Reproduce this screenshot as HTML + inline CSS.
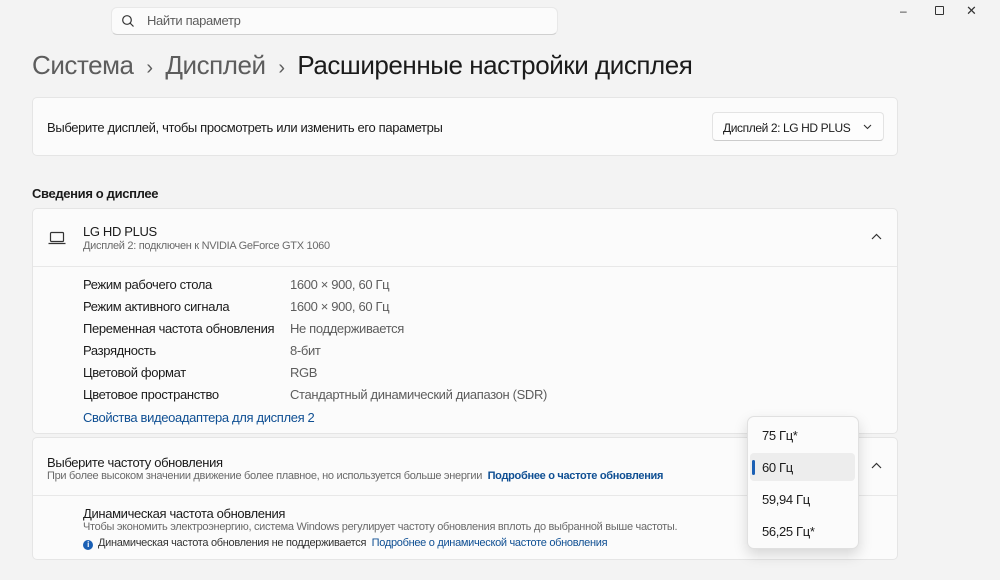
<!DOCTYPE html>
<html><head><meta charset="utf-8"><style>
*{box-sizing:border-box;margin:0;padding:0}
body{width:1000px;height:580px;background:#f3f3f3;font-family:"Liberation Sans",sans-serif;color:#1b1b1b;position:relative;overflow:hidden;font-size:13px;letter-spacing:-0.35px;white-space:nowrap}
.abs{position:absolute}
.card{position:absolute;left:32px;width:866px;background:#fbfbfb;border:1px solid #e5e5e5;border-radius:5px}
.link{color:#0f4f93}
.lbl{position:absolute;left:83px}
.val{position:absolute;left:290px;color:#5d5d5d}
.sub{color:#6a6a6a;font-size:11px;letter-spacing:-0.3px}
</style></head><body>
<div class="abs" style="left:111px;top:7px;width:447px;height:28px;background:#fbfbfb;border-radius:6px;border:1px solid #e8e8e8;border-bottom:1px solid #d0d0d0"></div>
<svg class="abs" style="left:121px;top:14px" width="14" height="14" viewBox="0 0 14 14"><circle cx="6" cy="6" r="4.3" fill="none" stroke="#333" stroke-width="1.2"/><line x1="9" y1="9" x2="12.5" y2="12.5" stroke="#333" stroke-width="1.2"/></svg>
<div class="abs" style="left:147px;top:13px;color:#5d5d5d">Найти параметр</div>
<div class="abs" style="left:900px;top:4px;font-size:12px;color:#333">–</div>
<div class="abs" style="left:935px;top:6px;width:9px;height:9px;border:1px solid #333;border-radius:1px"></div>
<div class="abs" style="left:966px;top:3px;font-size:13px;color:#333">✕</div>
<div class="abs" style="left:32px;top:50px;font-size:26px;letter-spacing:-0.45px;color:#5d5d5d">Система <span style="font-size:20px;margin:0 6px">›</span> Дисплей <span style="font-size:20px;margin:0 6px">›</span> <span style="color:#1b1b1b">Расширенные настройки дисплея</span></div>
<div class="card" style="top:97px;height:59px"></div>
<div class="abs" style="left:47px;top:120px">Выберите дисплей, чтобы просмотреть или изменить его параметры</div>
<div class="abs" style="left:712px;top:112px;width:172px;height:29px;background:#fdfdfd;border:1px solid #e3e3e3;border-bottom-color:#ccc;border-radius:4px;padding:8px 0 0 10px;font-size:12px;letter-spacing:-0.4px">Дисплей 2: LG HD PLUS</div>
<svg class="abs" style="left:863px;top:124px" width="9" height="6"><polyline points="1,1 4.5,4.5 8,1" fill="none" stroke="#333" stroke-width="1.1"/></svg>
<div class="abs" style="left:32px;top:186px;font-weight:bold;font-size:13px">Сведения о дисплее</div>
<div class="card" style="top:208px;height:226px"></div>
<div class="abs" style="left:33px;top:266px;width:864px;height:1px;background:#e8e8e8"></div>
<svg class="abs" style="left:48px;top:231px" width="18" height="14" viewBox="0 0 18 14"><rect x="2.5" y="1.5" width="13" height="9" rx="1" fill="none" stroke="#333" stroke-width="1.2"/><line x1="0.5" y1="12.5" x2="17.5" y2="12.5" stroke="#333" stroke-width="1.2"/></svg>
<div class="abs" style="left:83px;top:224px">LG HD PLUS</div>
<div class="abs sub" style="left:83px;top:240px">Дисплей 2: подключен к NVIDIA GeForce GTX 1060</div>
<svg class="abs" style="left:871px;top:233px" width="11" height="7"><polyline points="1,6 5.5,1.5 10,6" fill="none" stroke="#333" stroke-width="1.2"/></svg>
<div class="lbl" style="top:277px">Режим рабочего стола</div><div class="val" style="top:277px">1600 × 900, 60 Гц</div>
<div class="lbl" style="top:299px">Режим активного сигнала</div><div class="val" style="top:299px">1600 × 900, 60 Гц</div>
<div class="lbl" style="top:321px">Переменная частота обновления</div><div class="val" style="top:321px">Не поддерживается</div>
<div class="lbl" style="top:343px">Разрядность</div><div class="val" style="top:343px">8-бит</div>
<div class="lbl" style="top:365px">Цветовой формат</div><div class="val" style="top:365px">RGB</div>
<div class="lbl" style="top:387px">Цветовое пространство</div><div class="val" style="top:387px">Стандартный динамический диапазон (SDR)</div>
<div class="lbl link" style="top:410px">Свойства видеоадаптера для дисплея 2</div>
<div class="card" style="top:437px;height:123px"></div>
<div class="abs" style="left:33px;top:495px;width:864px;height:1px;background:#e8e8e8"></div>
<div class="abs" style="left:47px;top:455px">Выберите частоту обновления</div>
<div class="abs sub" style="left:47px;top:470px">При более высоком значении движение более плавное, но используется больше энергии&nbsp; <b class="link">Подробнее о частоте обновления</b></div>
<svg class="abs" style="left:871px;top:462px" width="11" height="7"><polyline points="1,6 5.5,1.5 10,6" fill="none" stroke="#333" stroke-width="1.2"/></svg>
<div class="abs" style="left:83px;top:506px">Динамическая частота обновления</div>
<div class="abs sub" style="left:83px;top:521px">Чтобы экономить электроэнергию, система Windows регулирует частоту обновления вплоть до выбранной выше частоты.</div>
<div class="abs" style="left:83px;top:540px;width:10px;height:10px;border-radius:50%;background:#1a5fb4;color:#fff;font-size:8px;text-align:center;line-height:10px;font-weight:bold">i</div>
<div class="abs sub" style="left:98px;top:537px;color:#333">Динамическая частота обновления не поддерживается&nbsp; <span class="link">Подробнее о динамической частоте обновления</span></div>
<div class="abs" style="left:747px;top:416px;width:112px;height:133px;background:#fbfbfb;border:1px solid #e0e0e0;border-radius:7px;box-shadow:0 6px 14px rgba(0,0,0,.15)"></div>
<div class="abs" style="left:750px;top:453px;width:105px;height:28px;background:#ededed;border-radius:4px"></div>
<div class="abs" style="left:752px;top:460px;width:3px;height:15px;background:#1a5fb4;border-radius:2px"></div>
<div class="abs" style="left:762px;top:428px">75 Гц*</div>
<div class="abs" style="left:762px;top:460px">60 Гц</div>
<div class="abs" style="left:762px;top:492px">59,94 Гц</div>
<div class="abs" style="left:762px;top:524px">56,25 Гц*</div>
</body></html>
